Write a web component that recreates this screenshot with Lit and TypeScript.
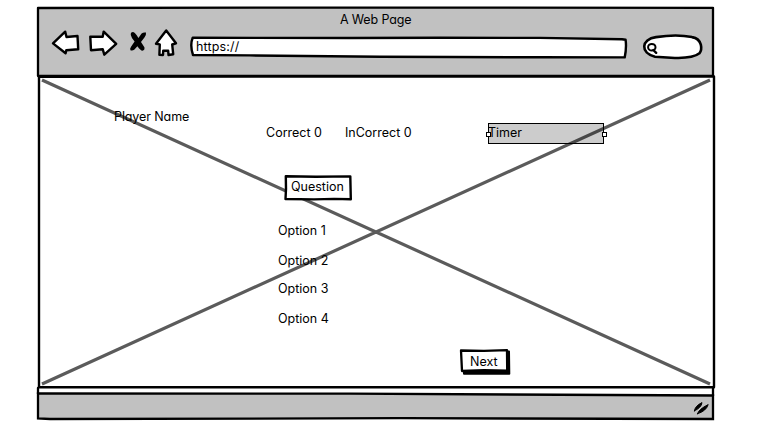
import { LitElement, html, css } from "lit";
import { customElement } from "lit/decorators.js";

@customElement("browser-header")
class BrowserHeader extends LitElement {
  static styles = css`
    :host { display: block; position: relative; height: 76px; box-sizing: border-box; padding: 12px 62px 0 51px; }
    svg { display: block; overflow: visible; fill: #fff; stroke: #000; stroke-width: 2.4; stroke-linejoin: round; stroke-linecap: round; }
    .frame { position: absolute; left: 0; top: 0; fill: #c1c1c1; }
    .title { position: relative; width: 71px; margin-left: 289px; height: 16px; line-height: 16px; white-space: nowrap; letter-spacing: -0.15px; }
    .bar { position: relative; display: flex; align-items: flex-start; height: 32px; }
    .icons { flex: none; width: 138px; height: 32px; }
    .address { position: relative; flex: none; width: 440px; height: 32px; }
    .address svg, .search svg { position: absolute; left: 0; top: 0; }
    .url { position: relative; display: block; padding: 11px 0 0 7px; line-height: 16px; letter-spacing: 0.15px; }
    .search { position: relative; flex: none; width: 62px; height: 32px; margin-left: 14px; }
    .ink { fill: #000; stroke: none; }
    .thin { stroke-width: 2; }
  `;
  render() {
    return html`
      <svg class="frame" width="764" height="78">
        <path stroke-width="2.3" d="M38 8 L300 7.6 L713 7.8 L713 76 L38 76 Z" />
      </svg>
      <div class="title">A Web Page</div>
      <div class="bar">
        <svg class="icons" viewBox="51 28 138 32">
          <path d="M53 43.4 L65.2 31.7 L66.5 37 L77.5 36 L78.2 49.2 L66.3 50.2 L65.6 53.3 Z" />
          <path d="M90.3 36.6 L102.7 36.8 L103.7 31.6 L116.2 43.8 L104.3 54.7 L102.7 49.2 L91 50.2 Z" />
          <path class="ink" d="M130.8 35 Q130.4 32 133 32 Q135.3 32.5 138.4 38 L141.6 33.6 Q143.5 31.9 146 32.6 Q146.4 35 144.6 37.2 L141 42 L144.4 47.2 Q145 50.2 142.4 50.7 Q140.6 50.6 137.4 46.2 L134.2 49.8 Q132.3 51 130.4 50.2 Q129.6 48.4 131.2 46.4 L134.6 41.6 Q131.2 37.6 130.8 35 Z" />
          <path d="M166.2 30.5 L176 43.3 L172.2 44.5 L173.2 54.2 L168.5 55 L168.2 50.8 L163.2 50.8 L163 55 L159.4 54.8 L159.8 44.4 L156 43.8 Z" />
        </svg>
        <div class="address">
          <svg width="440" height="32" viewBox="189 28 440 32">
            <path d="M192.7 37.8 Q280 37.6 350 38 L440 37.8 L540 37.9 L622 39.2 L625.6 39.8 Q626.7 48 624.7 57.4 L540 57.3 L450 57 L380 56.8 L250 55.4 L193 55 Q189.7 45 192.7 37.8 Z" />
          </svg>
          <span class="url">https://</span>
        </div>
        <div class="search">
          <svg width="62" height="32" viewBox="643 28 62 32">
            <path stroke-width="2.6" d="M656 37.1 Q677 34 692 37.1 C703 39 702 50 699.5 53.3 Q692 59 671 57.7 L655 56.7 C640 53 641 39 656 37.1 Z" />
            <ellipse class="thin" cx="651.8" cy="47.2" rx="3.7" ry="3.3" />
            <path stroke-width="2.4" d="M653.3 50 L656.2 52.8" />
          </svg>
        </div>
      </div>
    `;
  }
}

@customElement("quiz-canvas")
class QuizCanvas extends LitElement {
  static styles = css`
    :host { display: block; position: relative; height: 312px; box-sizing: border-box; padding-top: 33px; line-height: 16px; white-space: nowrap; }
    svg { display: block; position: absolute; left: 0; top: 0; overflow: visible; stroke: #000; stroke-linejoin: round; }
    .player { position: relative; padding-left: 114px; letter-spacing: -0.1px; }
    .stats { position: relative; display: flex; height: 19px; padding-left: 266px; }
    .correct { width: 79px; }
    .incorrect { width: 143px; }
    .timer { position: relative; box-sizing: border-box; width: 116px; height: 21px; margin-top: -2px; padding-top: 1px; text-indent: -1px; border: 1px solid #000; background: rgba(0, 0, 0, 0.2); }
    .timer::before, .timer::after { content: ""; position: absolute; top: 8px; width: 3px; height: 3px; border: 1px solid #000; background: #fff; }
    .timer::before { left: -3px; }
    .timer::after { right: -4px; }
    .question { position: relative; width: 68px; height: 26px; margin: 31px 0 0 284px; }
    .question span { position: relative; display: block; padding: 4px 0 0 7px; }
    .options { position: relative; list-style: none; margin: 0; padding: 22px 0 0 278px; }
    .options li { height: 16px; margin-bottom: 14px; }
    .options li:nth-child(2) { margin-bottom: 12px; }
    .options li:last-child { margin-bottom: 0; }
    .next { position: relative; width: 52px; height: 27px; margin: 21px 0 0 459px; }
    .next span { position: relative; display: block; padding: 6px 0 0 11px; }
  `;
  render() {
    return html`
      <svg width="764" height="312" viewBox="0 76 764 312">
        <path fill="#fff" stroke-width="2.4" d="M39 76.7 L714 76.5 L714 387.3 L39 387.3 Z" />
        <path fill="none" stroke="#5b5b5b" stroke-width="3.2" d="M42 80 L710 384 M42 384 L710 80" />
      </svg>
      <div class="player">Player Name</div>
      <div class="stats">
        <span class="correct">Correct 0</span>
        <span class="incorrect">InCorrect 0</span>
        <div class="timer">Timer</div>
      </div>
      <div class="question">
        <svg width="68" height="26">
          <path fill="#fff" stroke-width="2.4" d="M1.8 1.2 L32 1.7 L66.3 1.4 L66.8 24.2 L50 23.9 L30 24.4 L1.5 24 L2 14 Z" />
        </svg>
        <span>Question</span>
      </div>
      <ul class="options">
        ${[1, 2, 3, 4].map((n) => html`<li>Option ${n}</li>`)}
      </ul>
      <div class="next">
        <svg width="52" height="27">
          <path stroke-width="2" d="M5 5 L50 3.6 L50.3 25.7 L5 25.7 Z" />
          <path fill="#fff" stroke-width="2.3" d="M2 2.5 L25 2.9 L48 2.2 L48.2 22.6 L25 22.2 L3 23 Z" />
        </svg>
        <span>Next</span>
      </div>
    `;
  }
}

@customElement("browser-footer")
class BrowserFooter extends LitElement {
  static styles = css`
    :host { display: block; height: 42px; }
    svg { display: block; overflow: visible; stroke: #000; stroke-width: 2.3; stroke-linecap: round; }
  `;
  render() {
    return html`
      <svg width="764" height="42" viewBox="0 388 764 42">
        <path fill="#c1c1c1" d="M38 393.5 L350 393.7 L713 395.5 L713 419 L400 418.2 L50 419 L38 418.4 Z" />
        <path d="M38 388 V394 M713 388 V396" />
        <path d="M694.4 410.8 Q695 406 702 402.6 Q701.4 407.8 694.4 410.8 Z M697.5 413.7 Q698.5 409.5 708.2 404.6 Q706 411.3 697.5 413.7 Z" stroke-width="1" />
      </svg>
    `;
  }
}

@customElement("app-root")
class AppRoot extends LitElement {
  static styles = css`
    :host { display: block; width: 764px; height: 430px; overflow: hidden; background: #fff; color: #000; font: 12.5px/16px Inter, "Liberation Sans", sans-serif; font-feature-settings: "cv11"; }
  `;
  render() {
    return html`<browser-header></browser-header><quiz-canvas></quiz-canvas><browser-footer></browser-footer>`;
  }
}
